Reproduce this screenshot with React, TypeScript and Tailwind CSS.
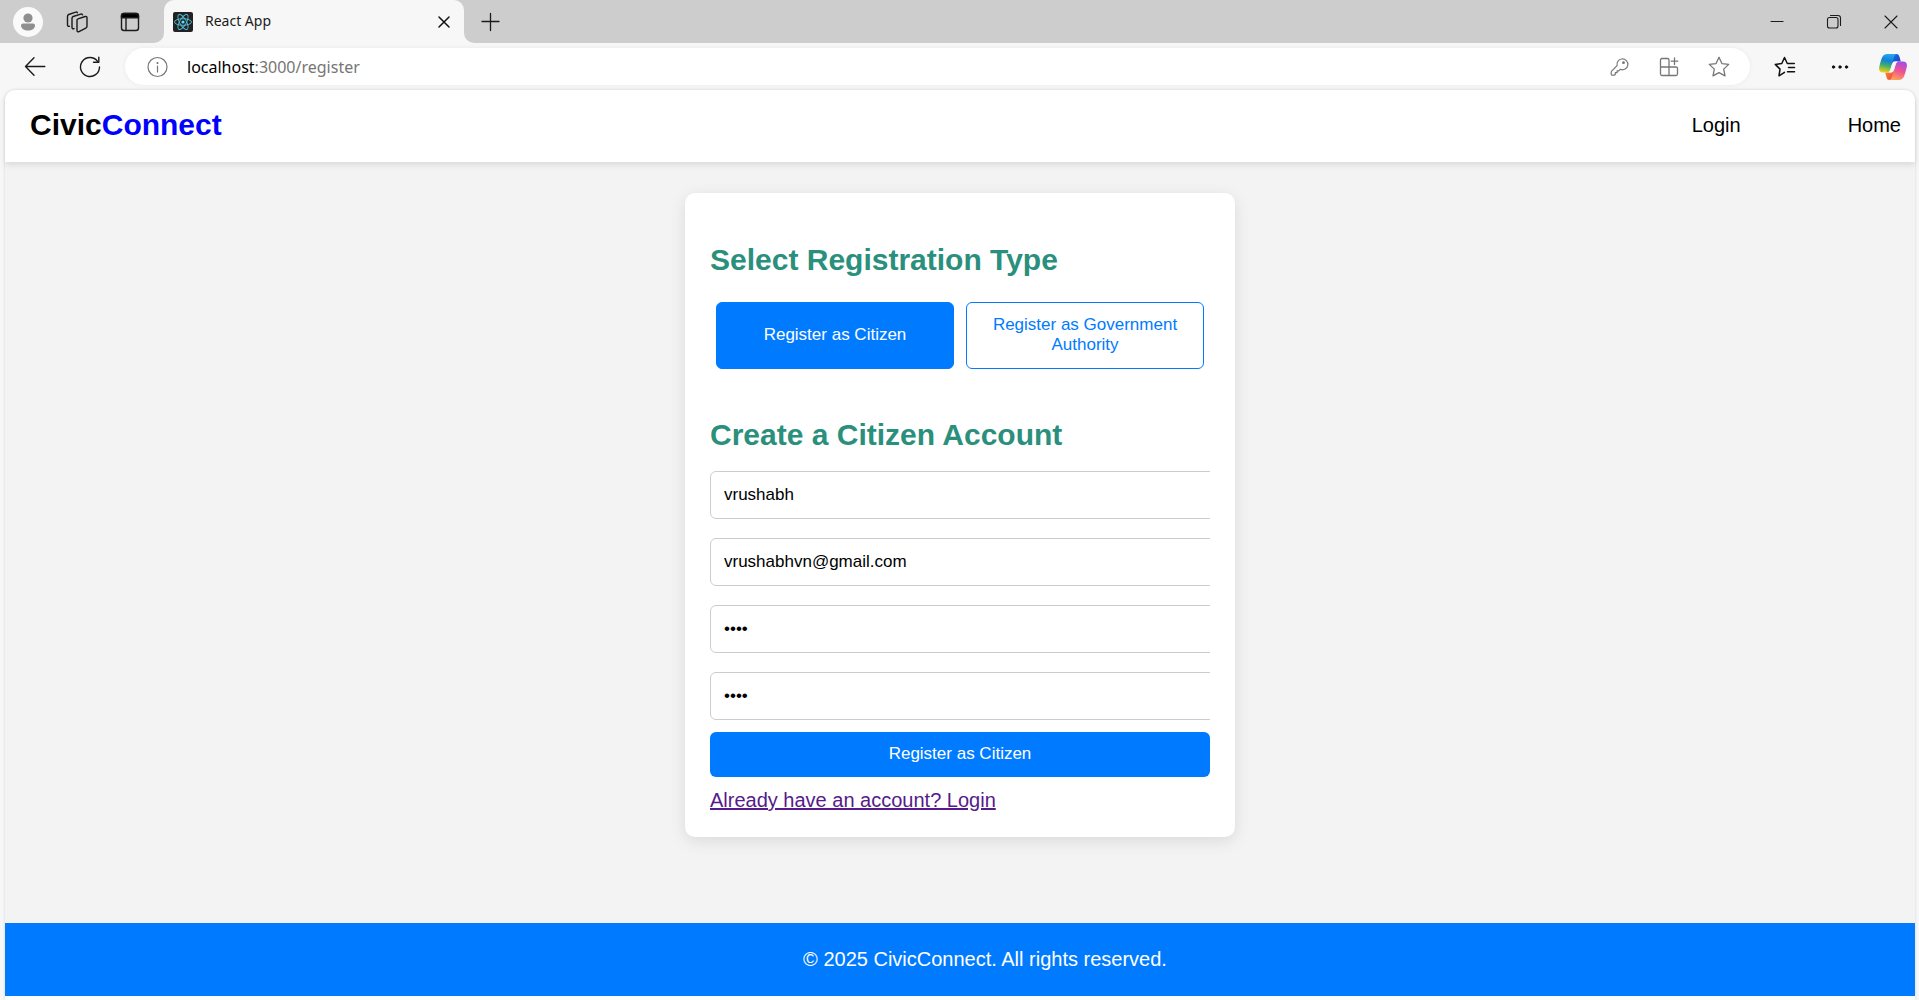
import React from "react";

type IconProps = { children: React.ReactNode; size?: number; color?: string; width?: number };

function Icon({ children, size = 24, color = "#1b1b1b", width = 1.3 }: IconProps) {
  return (
    <svg
      width={size}
      height={size}
      viewBox="0 0 24 24"
      fill="none"
      stroke={color}
      strokeWidth={width}
      strokeLinecap="round"
      strokeLinejoin="round"
      aria-hidden="true"
      className="shrink-0"
    >
      {children}
    </svg>
  );
}

function IconButton({ label, className, children }: { label: string; className: string; children: React.ReactNode }) {
  return (
    <button type="button" aria-label={label} className={`flex shrink-0 items-center justify-center ${className}`}>
      {children}
    </button>
  );
}

function ReactFavicon() {
  return (
    <svg width="20" height="20" viewBox="0 0 20 20" aria-hidden="true" className="shrink-0">
      <rect width="20" height="20" rx="2" fill="#222222" />
      <circle cx="10" cy="10" r="1.6" fill="#61dafb" />
      <g fill="none" stroke="#53c1de" strokeWidth="0.9">
        <ellipse cx="10" cy="10" rx="8.5" ry="3.3" />
        <ellipse cx="10" cy="10" rx="8.5" ry="3.3" transform="rotate(60 10 10)" />
        <ellipse cx="10" cy="10" rx="8.5" ry="3.3" transform="rotate(120 10 10)" />
      </g>
    </svg>
  );
}

function CopilotLogo() {
  return (
    <svg width="28" height="26" viewBox="0 0 28 26" aria-hidden="true">
      <defs>
        <linearGradient id="coolRibbon" x1="0.5" y1="0" x2="0.3" y2="1">
          <stop offset="0" stopColor="#22a7f0" />
          <stop offset="0.35" stopColor="#1480d8" />
          <stop offset="0.62" stopColor="#3fae6b" />
          <stop offset="1" stopColor="#f5d213" />
        </linearGradient>
        <linearGradient id="warmRibbon" x1="0.7" y1="0" x2="0.35" y2="1">
          <stop offset="0" stopColor="#a44be8" />
          <stop offset="0.5" stopColor="#ee5490" />
          <stop offset="1" stopColor="#ffa355" />
        </linearGradient>
        <linearGradient id="topFold" x1="0" y1="0" x2="1" y2="1">
          <stop offset="0" stopColor="#1b6fe0" />
          <stop offset="1" stopColor="#1c3fd0" />
        </linearGradient>
        <linearGradient id="lowFold" x1="0" y1="0" x2="1" y2="1">
          <stop offset="0" stopColor="#f7941f" />
          <stop offset="1" stopColor="#ee3f4e" />
        </linearGradient>
      </defs>
      <path d="M14 0h3.600c1.500 0 2.300 1 2.700 2.300L21.800 7.500h-4.800c-2.400 0-3.300 1.600-4 4L12 5z" fill="url(#topFold)" />
      <path d="M14 26h-3.600c-1.500 0-2.300-1-2.700-2.300L6.200 18.500H11c2.400 0 3.300-1.600 4-4L16 21z" fill="url(#lowFold)" />
      <path d="M8.500 0H18c-1.800.2-2.600 1.700-3.200 3.700L11.500 15c-.6 2-1.500 3.500-4 3.500H4c-3 0-4.500-2.300-3.800-5.200C1 9.400 2 6 3.300 3 4.300.9 6 0 8.500 0z" fill="url(#coolRibbon)" />
      <path d="M19.500 26H10c1.800-.2 2.600-1.700 3.200-3.700L16.500 11c.6-2 1.500-3.500 4-3.500H24c3 0 4.500 2.300 3.800 5.200C27 16.600 26 20 24.700 23c-1 2.100-2.700 3-5.200 3z" fill="url(#warmRibbon)" />
      <path d="M15.600 7.500h2.700c-1 .8-1.400 2-1.800 3.300l-1.800 6c-.4 1.200-1.200 1.700-2.300 1.700H9.700c1-.8 1.500-2 1.800-3.300l1.800-6c.4-1.200 1.200-1.700 2.300-1.700z" fill="#f7f7f7" />
    </svg>
  );
}

function TabStrip() {
  return (
    <div className="flex h-[43px] bg-[#f7f7f7]">
      <div className="flex w-[164px] shrink-0 items-center rounded-br-[10px] bg-[#cdcdcd] pl-[13px]">
        <IconButton label="Profile" className="size-[30px] rounded-full bg-[#fafafa]">
          <svg width="30" height="30" viewBox="0 0 30 30" fill="#8f8f8f" aria-hidden="true">
            <circle cx="15" cy="11" r="4.600" />
            <path d="M10.200 16.500h9.600c1.400 0 2.200.8 2.200 2 0 3-3.200 5-7 5s-7-2-7-5c0-1.200.8-2 2.200-2z" />
          </svg>
        </IconButton>
        <IconButton label="Workspaces" className="ml-[22px] size-6">
          <Icon width={1.400}>
            <path d="M13 8.800 20.200 6.500c1-.3 1.800.2 1.800 1.200v8.600c0 .9-.4 1.500-1.200 1.800L14 21.600c-1.100.5-2 0-2-1.200V10.200c0-.8.300-1.200 1-1.400z" />
            <path d="M9 18.600c-1.200.5-2-.1-2-1.200V8.200c0-.9.4-1.400 1.200-1.700l7.600-2.400c.9-.3 1.500 0 1.700.8" />
            <path d="M4.400 16.300c-1 .3-1.900-.2-1.900-1.300V6.200c0-.9.4-1.400 1.200-1.700l7-2.300c.8-.3 1.400-.1 1.700.6" />
          </Icon>
        </IconButton>
        <IconButton label="Tab actions menu" className="ml-[29px] size-6">
          <Icon width={1.4}>
            <rect x="3.500" y="3.500" width="17" height="17" rx="2.500" />
            <path d="M3.500 7V6A2.500 2.500 0 0 1 6 3.500h12A2.500 2.500 0 0 1 20.500 6v1.800h-17z" fill="#000" />
            <path d="M8 8v12" />
          </Icon>
        </IconButton>
      </div>
      <div className="w-[300px] shrink-0 bg-[#cdcdcd]">
        <div className="flex h-full items-center rounded-t-[10px] bg-[#f7f7f7] pr-2 pl-[9px]">
          <ReactFavicon />
          <span className="ml-3 flex-1 pb-0.5 font-['Noto_Sans',sans-serif] text-[14px] leading-5 text-[#1b1b1b]">React App</span>
          <IconButton label="Close tab" className="size-6">
            <Icon color="#111" width={1.5}>
              <path d="m7 7 10 10M17 7 7 17" />
            </Icon>
          </IconButton>
        </div>
      </div>
      <div className="flex min-w-0 flex-1 items-center justify-between rounded-bl-[10px] bg-[#cdcdcd]">
        <IconButton label="New tab" className="ml-[14px] size-6">
          <Icon>
            <path d="M12.500 3.500v17M4 11.500h17" />
          </Icon>
        </IconButton>
        <div className="flex">
          <IconButton label="Minimize" className="h-[43px] w-[57px]">
            <Icon width={1.100}>
              <path d="M6 11.500h12" />
            </Icon>
          </IconButton>
          <IconButton label="Restore" className="h-[43px] w-[57px]">
            <Icon width={1.100}>
              <rect x="5.500" y="7.500" width="10.500" height="10.500" rx="2" />
              <path d="M8.500 5.500h7.500a2.500 2.500 0 0 1 2.500 2.500v7.500" />
            </Icon>
          </IconButton>
          <IconButton label="Close window" className="h-[43px] w-[57px]">
            <Icon width={1.100}>
              <path d="m6 6 12 12M18 6 6 18" />
            </Icon>
          </IconButton>
        </div>
      </div>
    </div>
  );
}

const STAR = "M12 2.300l2.900 6.300 6.800.8-5 4.700 1.300 6.800L12 17.600l-6 3.300 1.300-6.800-5-4.700 6.800-.8z";

function Toolbar() {
  return (
    <div className="flex h-[47px] items-center bg-[#f7f7f7] pl-[23px]">
      <IconButton label="Back" className="size-6">
        <Icon width={1.400}>
          <path d="M11 2.700 2.500 11.500l8.500 8.800M2.500 11.500h19.300" />
        </Icon>
      </IconButton>
      <IconButton label="Refresh" className="ml-[31px] size-6">
        <Icon width={1.400}>
          <path d="M21.500 12A9.500 9.500 0 1 1 19.600 6.300" />
          <path d="M20.800 2.300v5h-5.300" />
        </Icon>
      </IconButton>
      <div className="mr-[12px] ml-[23px] flex h-[37px] min-w-0 flex-1 items-center rounded-full bg-white pr-[19px] pl-5 shadow-[0_0_5px_rgba(0,0,0,0.06)]">
        <IconButton label="Site information" className="size-6">
          <Icon color="#767676" width={1.200}>
            <circle cx="12.500" cy="12" r="9.500" />
            <path d="M12.500 11v6" />
            <circle cx="12.500" cy="8" r="0.500" fill="#767676" />
          </Icon>
        </IconButton>
        <div className="ml-[18px] flex-1 font-['Noto_Sans',sans-serif] text-[16px] leading-6 text-[#767676]">
          <span className="text-black">localhost</span>:3000/register
        </div>
        <div className="flex items-center gap-[26px]">
          <IconButton label="Saved passwords" className="size-6">
            <Icon color="#767676" width={1.200}>
              <path d="M14.800 4a5.400 5.400 0 1 1-1.500 10.300l-1.500 1.500h-1.700v1.900H8.300v1.600c0 .5-.3.800-.8.800H5c-.5 0-.8-.3-.8-.8v-2.200c0-.4.100-.7.400-1l5.500-5.500A5.400 5.400 0 0 1 14.800 4z" />
              <circle cx="16.500" cy="7.700" r="0.800" fill="#767676" />
            </Icon>
          </IconButton>
          <IconButton label="Install app" className="size-6">
            <Icon color="#767676" width={1.300}>
              <path d="M12 12H3.500V5c0-.9.600-1.500 1.500-1.500h5.500c.9 0 1.500.6 1.500 1.500zM12 12v8.500M3.500 12v7c0 .9.600 1.500 1.500 1.500h14c.9 0 1.500-.6 1.500-1.500v-5.500c0-.9-.6-1.500-1.500-1.500h-7M17.500 3v6.500M14.200 6.200h6.600" />
            </Icon>
          </IconButton>
          <IconButton label="Add to favorites" className="size-6">
            <Icon color="#767676" width={1.300}>
              <path d={STAR} />
            </Icon>
          </IconButton>
        </div>
      </div>
      <div className="flex items-center pr-[12px]">
        <IconButton label="Favorites" className="ml-[11px] size-6">
          <Icon color="#111" width={1.500}>
            <path d="M11.500 17.300 6 20.800l1-6.700-4.700-4.700 6.500-.9L11.500 2.500l2.800 6h7M15.500 12.500h6M14.500 16.700h7" />
          </Icon>
        </IconButton>
        <IconButton label="Settings and more" className="ml-[31px] size-6">
          <Icon color="#111" width={1}>
            <g fill="#111">
              <circle cx="5.500" cy="12" r="1.200" />
              <circle cx="12" cy="12" r="1.200" />
              <circle cx="18.500" cy="12" r="1.200" />
            </g>
          </Icon>
        </IconButton>
        <IconButton label="Copilot" className="ml-[27px]">
          <CopilotLogo />
        </IconButton>
      </div>
    </div>
  );
}

function SiteHeader() {
  return (
    <header className="z-10 flex h-[72px] items-center justify-between rounded-t-[10px] bg-white pr-[14px] pb-0.5 pl-[25px] shadow-[0_3px_6px_rgba(0,0,0,0.1)]">
      <h1 className="text-[30px] leading-9 font-bold">
        Civic<span className="text-[#0000ff]">Connect</span>
      </h1>
      <nav className="flex gap-[107px] text-[20px] leading-6">
        <a href="#login">Login</a>
        <a href="#home">Home</a>
      </nav>
    </header>
  );
}

const FIELDS = [
  { label: "Name", type: "text", value: "vrushabh" },
  { label: "Email", type: "email", value: "vrushabhvn@gmail.com" },
  { label: "Password", type: "password", value: "1234" },
  { label: "Confirm password", type: "password", value: "1234" },
];

function RegistrationCard() {
  return (
    <section className="w-[550px] max-w-full rounded-[10px] bg-white p-[25px] shadow-[0_4px_16px_rgba(0,0,0,0.1)]">
      <h2 className="mt-[25px] text-[30px] leading-[34px] font-bold text-[#2a8f7c]">Select Registration Type</h2>
      <div className="mt-[25px] flex gap-3 px-1.5">
        <button type="button" className="h-[67px] flex-1 rounded-[6px] border border-[#007bff] bg-[#007bff] px-5 pb-0.5 text-[17px] leading-5 text-white">
          Register as Citizen
        </button>
        <button type="button" className="h-[67px] flex-1 rounded-[6px] border border-[#007bff] bg-white px-5 pb-0.5 text-[17px] leading-5 text-[#007bff]">
          Register as Government Authority
        </button>
      </div>
      <h2 className="mt-[49px] text-[30px] leading-[34px] font-bold text-[#2a8f7c]">Create a Citizen Account</h2>
      <form className="mt-[19px] overflow-hidden" onSubmit={(e) => e.preventDefault()}>
        <div className="flex flex-col gap-[19px]">
          {FIELDS.map((field) => (
            <input
              key={field.label}
              aria-label={field.label}
              type={field.type}
              defaultValue={field.value}
              autoComplete="off"
              className="h-12 w-[calc(100%+28px)] rounded-[6px] border border-[#cccccc] bg-white px-[13px] text-[17px] outline-none"
            />
          ))}
        </div>
        <button type="submit" className="mt-3 h-[45px] w-full rounded-[6px] bg-[#007bff] pb-0.5 text-[17px] leading-5 text-white">
          Register as Citizen
        </button>
      </form>
      <a href="#login" className="mt-3 block w-fit text-[20px] leading-[23px] text-[#551a8b] underline">
        Already have an account? Login
      </a>
    </section>
  );
}

export default function App() {
  return (
    <div className="flex min-h-screen flex-col bg-[#f7f7f7] font-['Liberation_Sans',Arial,sans-serif] text-black">
      <TabStrip />
      <Toolbar />
      <div className="mr-1 ml-[5px] flex flex-1 flex-col rounded-t-[10px] bg-[#fcfcfc] pb-1 shadow-[0_0_3px_rgba(0,0,0,0.15)]">
        <SiteHeader />
        <main className="flex flex-1 justify-center bg-[#f3f3f3] pt-[31px] pb-[86px]">
          <RegistrationCard />
        </main>
        <footer className="flex h-[73px] items-center justify-center bg-[#007bff] pb-0.5 pl-[50px] text-[20px] leading-6 text-white">
          © 2025 CivicConnect. All rights reserved.
        </footer>
      </div>
    </div>
  );
}
